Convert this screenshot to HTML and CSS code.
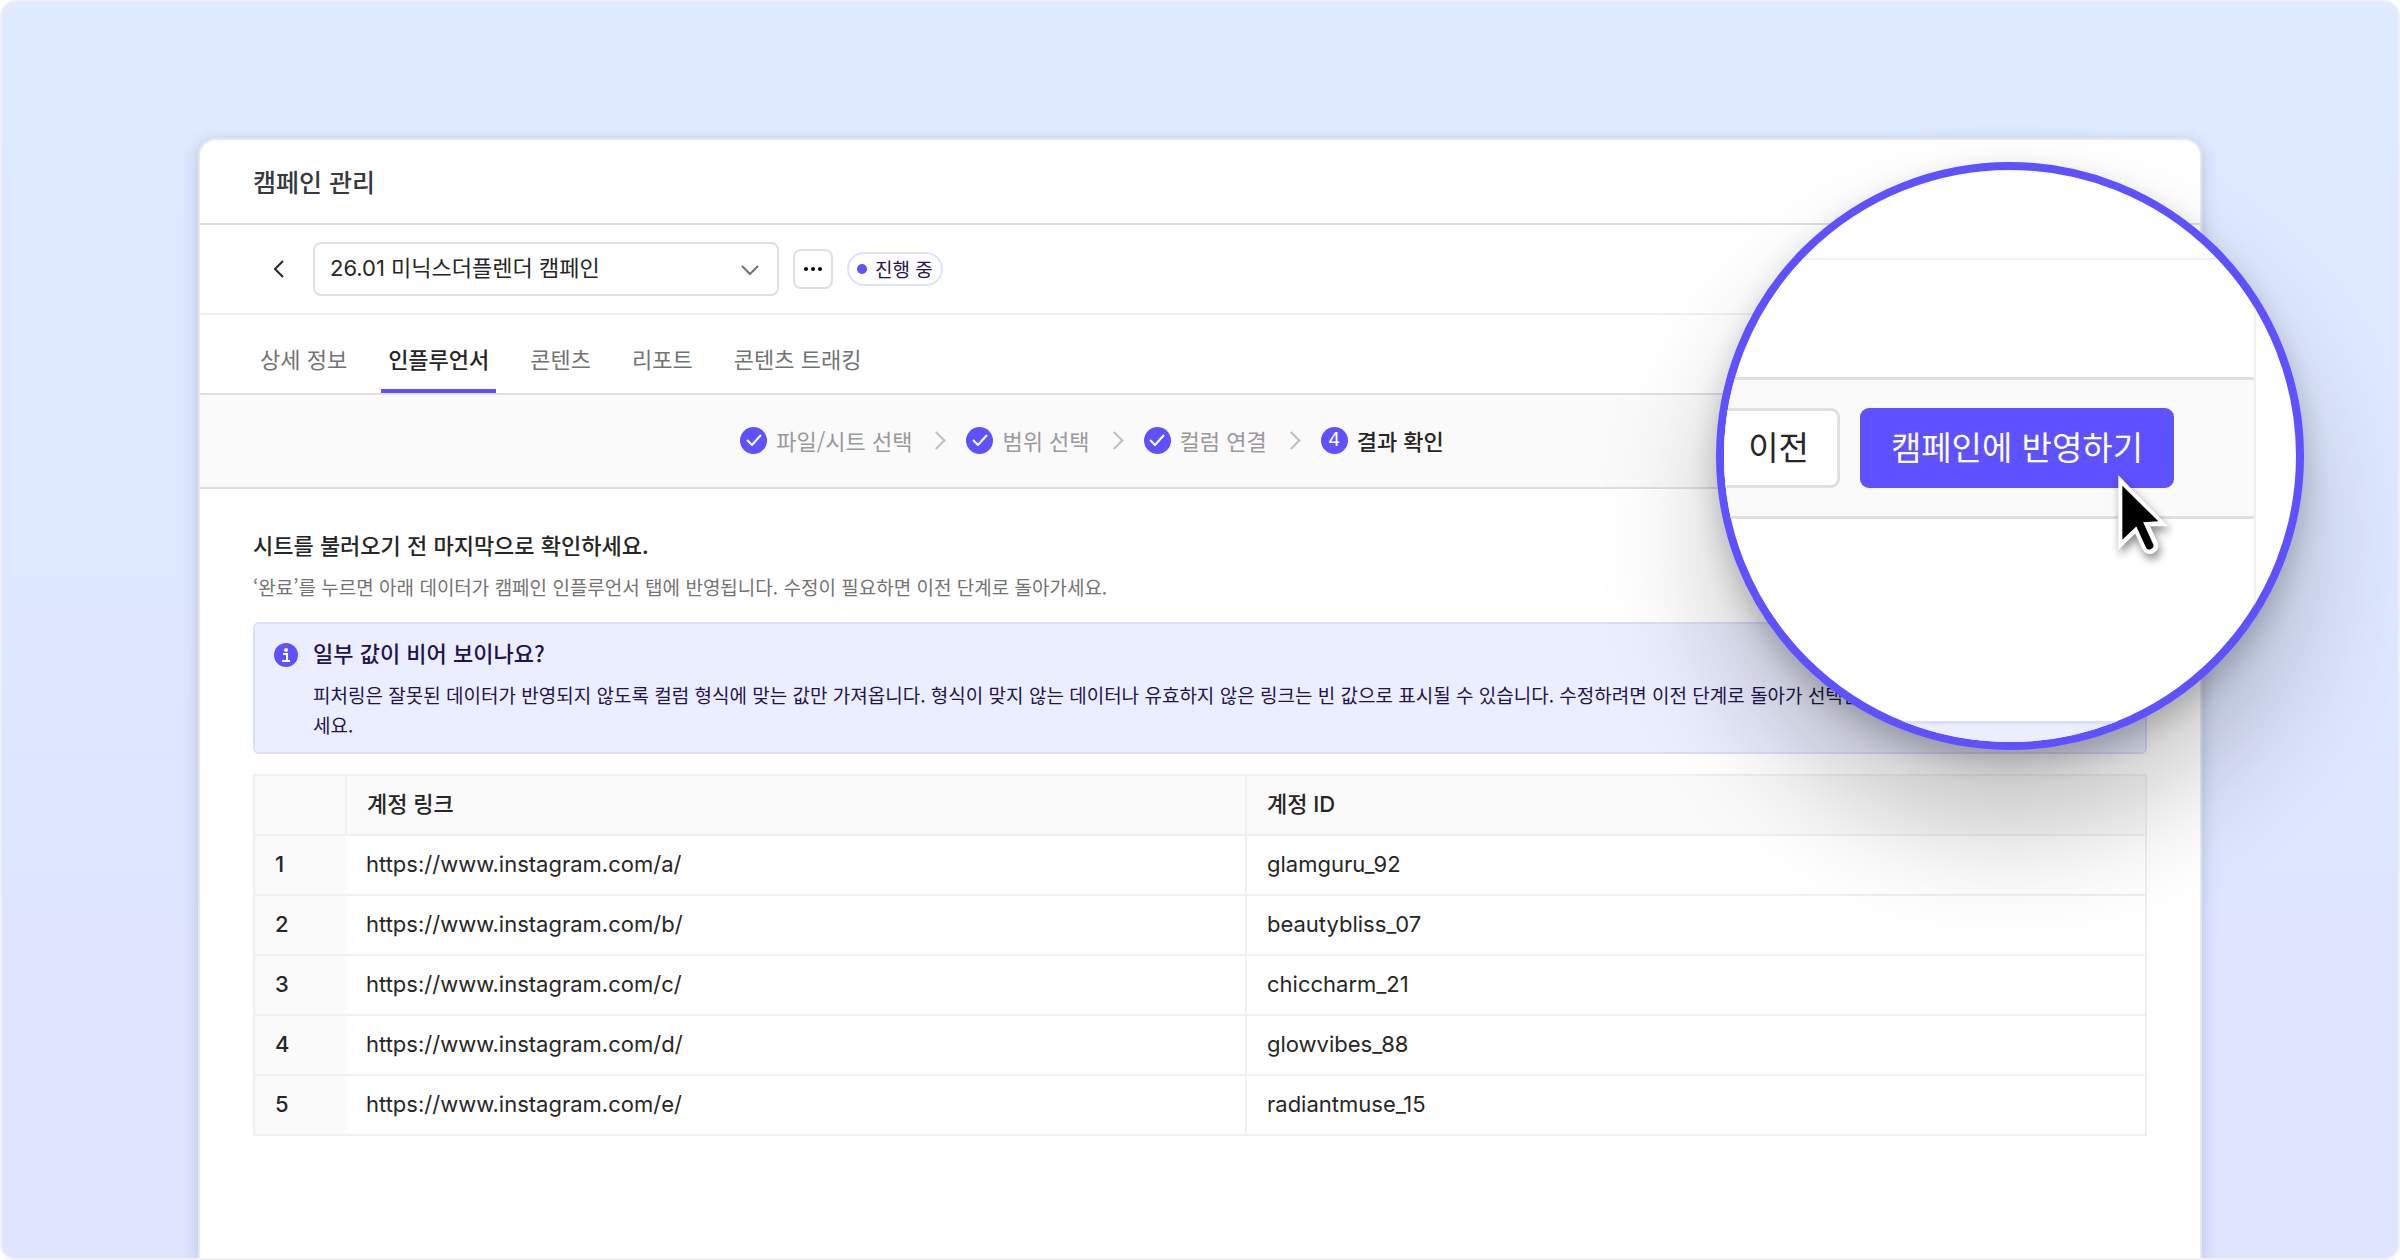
FILE: index.html
```html
<!DOCTYPE html>
<html lang="ko">

<head>
    <meta charset="UTF-8">
    <meta name="viewport" content="width=device-width, initial-scale=1.0">
    <title>캠페인 관리</title>
    <link rel="stylesheet" href="styles.css">
</head>

<body>
    <div class="stage">
        <main class="panel">
            <header class="panel-header">
                <h1>캠페인 관리</h1>
            </header>

            <div class="toolbar">
                <button class="back" type="button" aria-label="뒤로">
                    <svg width="12" height="18" viewBox="0 0 12 18"><path d="M10 1 2 9l8 8" /></svg>
                </button>
                <div class="select-box">
                    <select aria-label="캠페인 선택">
                        <option>26.01 미닉스더플렌더 캠페인</option>
                    </select>
                    <svg class="select-arrow" width="18" height="12" viewBox="0 0 18 12"><path d="m1 2 8 8 8-8" /></svg>
                </div>
                <button class="more" type="button" aria-label="더보기">
                    <svg width="18" height="4" viewBox="0 0 18 4">
                        <circle cx="2" cy="2" r="2" />
                        <circle cx="9" cy="2" r="2" />
                        <circle cx="16" cy="2" r="2" />
                    </svg>
                </button>
                <span class="status">진행 중</span>
            </div>

            <nav class="tabs">
                <a href="#info">상세 정보</a>
                <a href="#influencer" class="active">인플루언서</a>
                <a href="#contents">콘텐츠</a>
                <a href="#report">리포트</a>
                <a href="#tracking">콘텐츠 트래킹</a>
            </nav>

            <ol class="steps">
                <li>
                    <span class="step-mark"><svg width="16" height="12" viewBox="0 0 16 12"><path d="m1 6 5 5 9-10" /></svg></span>
                    파일/시트 선택
                </li>
                <li>
                    <span class="step-mark"><svg width="16" height="12" viewBox="0 0 16 12"><path d="m1 6 5 5 9-10" /></svg></span>
                    범위 선택
                </li>
                <li>
                    <span class="step-mark"><svg width="16" height="12" viewBox="0 0 16 12"><path d="m1 6 5 5 9-10" /></svg></span>
                    컬럼 연결
                </li>
                <li class="current">
                    <span class="step-mark">4</span>
                    결과 확인
                </li>
            </ol>

            <section class="content">
                <h2>시트를 불러오기 전 마지막으로 확인하세요.</h2>
                <p class="desc">‘완료’를 누르면 아래 데이터가 캠페인 인플루언서 탭에 반영됩니다. 수정이 필요하면 이전 단계로 돌아가세요.</p>

                <div class="notice">
                    <svg class="notice-icon" width="24" height="24" viewBox="0 0 24 24">
                        <circle cx="12" cy="12" r="12" fill="#5e51ff" />
                        <circle cx="12" cy="7" r="2" fill="#fff" />
                        <path d="M9 11h4v7M8 18h8" fill="none" stroke="#fff" stroke-width="2" />
                    </svg>
                    <div>
                        <h3>일부 값이 비어 보이나요?</h3>
                        <p>피처링은 잘못된 데이터가 반영되지 않도록 컬럼 형식에 맞는 값만 가져옵니다. 형식이 맞지 않는 데이터나 유효하지 않은 링크는 빈 값으로 표시될 수 있습니다. 수정하려면 이전 단계로 돌아가 선택한 컬럼과 데이터 형식을 확인해주세요.</p>
                    </div>
                </div>

                <table>
                    <thead>
                        <tr>
                            <th class="num"></th>
                            <th>계정 링크</th>
                            <th>계정 ID</th>
                        </tr>
                    </thead>
                    <tbody>
                        <tr>
                            <td class="num">1</td>
                            <td>https://www.instagram.com/a/</td>
                            <td>glamguru_92</td>
                        </tr>
                        <tr>
                            <td class="num">2</td>
                            <td>https://www.instagram.com/b/</td>
                            <td>beautybliss_07</td>
                        </tr>
                        <tr>
                            <td class="num">3</td>
                            <td>https://www.instagram.com/c/</td>
                            <td>chiccharm_21</td>
                        </tr>
                        <tr>
                            <td class="num">4</td>
                            <td>https://www.instagram.com/d/</td>
                            <td>glowvibes_88</td>
                        </tr>
                        <tr>
                            <td class="num">5</td>
                            <td>https://www.instagram.com/e/</td>
                            <td>radiantmuse_15</td>
                        </tr>
                    </tbody>
                </table>
            </section>
        </main>

        <!-- Lupa sobre los botones -->
        <div class="lens">
            <div class="lens-page">
                <div class="lens-toolbar"></div>
                <div class="lens-tabs"></div>
                <div class="lens-actions">
                    <button class="button" type="button">이전</button>
                    <button class="button primary" type="button">캠페인에 반영하기</button>
                </div>
                <div class="lens-content">
                    <div class="lens-notice"></div>
                </div>
            </div>
        </div>

        <svg class="cursor" width="60" height="90" viewBox="0 0 180 270">
            <path d="M10 10 160 163H102L59 186 10 234Z" fill="#fff" />
            <path d="m72 150 33 71" stroke="#fff" stroke-width="50" stroke-linecap="round" />
            <path d="m22 41 108 107-48 3-19 13-41 39Z" fill="#000" />
            <path d="m72 152 31 68" stroke="#000" stroke-width="24" stroke-linecap="round" />
        </svg>
    </div>
</body>

</html>
```
FILE: styles.css
```css
* {
    box-sizing: border-box;
}

body {
    margin: 0;
    background-color: #ffffff;
    color: #262626;
    font-family: "Noto Sans CJK KR", sans-serif;
    font-size: 22px;
    line-height: 32px;
}

h1,
h2,
h3,
p {
    margin: 0;
}

button,
select {
    font: inherit;
    color: inherit;
    cursor: pointer;
}

.stage {
    position: relative;
    min-height: 100vh;
    display: flex;
    padding: 136px 196px 0;
    overflow: hidden;
    border: 2px solid #f0f0f2;
    border-radius: 16px;
    background: linear-gradient(#deebff, #dee9ff 20%, #dee8ff 45%, #dfe5ff 75%);
}

.panel {
    flex: 1;
    background-color: #ffffff;
    border: 2px solid #e8e8ec;
    border-bottom: none;
    border-radius: 18px 18px 0 0;
    box-shadow: 0 4px 16px rgba(60, 70, 140, 0.25);
}

/* Cabecera */
.panel-header {
    display: flex;
    align-items: center;
    height: 85px;
    padding: 0 53px 2px;
    border-bottom: 2px solid #e0e0e0;
}

h1 {
    font-size: 25px;
    font-weight: 500;
    color: #343a40;
}

.toolbar {
    display: flex;
    align-items: center;
    gap: 14px;
    height: 90px;
    padding: 0 59px;
    border-bottom: 2px solid #f0f0f0;
}

.back {
    display: flex;
    align-items: center;
    justify-content: center;
    width: 40px;
    height: 40px;
    padding: 0;
    border: none;
    background: none;
}

.back path {
    fill: none;
    stroke: #262626;
    stroke-width: 2;
}

.select-box {
    display: flex;
    position: relative;
    width: 466px;
}

.select-box select {
    width: 100%;
    height: 54px;
    padding: 0 48px 2px 15px;
    border: 2px solid #e0e0e0;
    border-radius: 8px;
    background-color: #ffffff;
    font-family: "Inter", "Noto Sans CJK KR", sans-serif;
    appearance: none;
}

.select-arrow {
    position: absolute;
    right: 20px;
    top: 22px;
    fill: none;
    stroke: #737373;
    stroke-width: 2;
    pointer-events: none;
}

.more {
    display: flex;
    align-items: center;
    justify-content: center;
    width: 40px;
    height: 40px;
    padding: 0;
    border: 2px solid #e0e0e0;
    border-radius: 8px;
    background-color: #ffffff;
}

.status {
    display: flex;
    align-items: center;
    gap: 8px;
    height: 34px;
    padding: 0 8px;
    border: 2px solid #dfe2ff;
    border-radius: 17px;
    color: #1f1450;
    font-size: 19px;
}

.status::before {
    content: "";
    width: 10px;
    height: 10px;
    border-radius: 50%;
    background-color: #5e51ff;
}

/* Pestañas */
.tabs {
    display: flex;
    gap: 27px;
    height: 80px;
    padding: 10px 53px 0;
    border-bottom: 2px solid #e0e0e0;
}

.tabs a {
    display: flex;
    align-items: center;
    padding: 2px 7px 0;
    border-bottom: 4px solid transparent;
    color: #737373;
    text-decoration: none;
}

.tabs a.active {
    border-bottom-color: #5e51ff;
    color: #262626;
    font-weight: 500;
}

/* Pasos */
.steps {
    display: flex;
    align-items: center;
    justify-content: center;
    height: 94px;
    margin: 0;
    padding: 0 269px 2px 53px;
    border-bottom: 2px solid #e0e0e0;
    background-color: #fafafa;
    color: #999999;
    list-style: none;
}

.steps li {
    display: flex;
    align-items: center;
    gap: 9px;
}

.steps li + li::before {
    content: "";
    width: 11px;
    height: 11px;
    margin: 0 14px 0 18px;
    border: solid #bfbfbf;
    border-width: 2px 2px 0 0;
    transform: rotate(45deg);
}

.steps .current {
    color: #262626;
    font-weight: 500;
}

.step-mark {
    display: flex;
    align-items: center;
    justify-content: center;
    width: 27px;
    height: 27px;
    border-radius: 50%;
    background-color: #5e51ff;
    color: #ffffff;
    font-family: "Inter", sans-serif;
    font-size: 19px;
    font-weight: 400;
}

.step-mark path {
    fill: none;
    stroke: #ffffff;
    stroke-width: 2;
}

/* Contenido */
.content {
    padding: 39px 53px;
}

h2,
h3 {
    font-size: 22px;
    font-weight: 500;
}

.desc {
    margin-top: 12px;
    color: #737373;
    font-size: 19px;
    line-height: 30px;
}

.notice {
    display: flex;
    gap: 15px;
    margin-top: 20px;
    padding: 12px 20px 12px 19px;
    border: 2px solid #dbdfff;
    border-radius: 6px;
    background-color: #ebeeff;
    color: #1f1450;
}

.notice-icon {
    flex: none;
    margin-top: 7px;
}

.notice p {
    margin-top: 12px;
    font-size: 19px;
    line-height: 30px;
    word-break: break-all;
}

table {
    width: 100%;
    margin-top: 20px;
    border-collapse: collapse;
    table-layout: fixed;
    border: 2px solid #f0f0f0;
    font-family: "Inter", "Noto Sans CJK KR", sans-serif;
}

th,
td {
    height: 60px;
    padding: 0 20px 2px;
    border-bottom: 2px solid #f0f0f0;
    text-align: left;
    font-weight: 400;
}

th {
    background-color: #fafafa;
    font-weight: 500;
}

th + th,
td:last-child {
    border-left: 2px solid #f0f0f0;
}

.num {
    width: 92px;
    background-color: #fafafa;
    font-weight: 500;
}

/* Lupa */
.lens {
    position: absolute;
    top: 160px;
    right: 94px;
    width: 588px;
    height: 588px;
    overflow: hidden;
    border: 8px solid #5e51ff;
    border-radius: 50%;
    background-color: #ffffff;
    box-shadow: 0 12px 28px rgba(0, 0, 0, 0.2), 0 80px 120px rgba(0, 0, 0, 0.22);
}

.lens-page {
    margin-right: 40px;
    border-right: 2px solid #f0f0f0;
}

.lens-toolbar {
    height: 90px;
    border-bottom: 2px solid #f0f0f0;
}

.lens-tabs {
    height: 120px;
    border-bottom: 3px solid #e0e0e0;
}

.lens-actions {
    display: flex;
    align-items: center;
    justify-content: flex-end;
    gap: 20px;
    height: 139px;
    padding-right: 80px;
    border-bottom: 3px solid #e0e0e0;
    background-color: #fafafa;
}

.button {
    height: 80px;
    padding: 0 28px 5px;
    border: 3px solid #e0e0e0;
    border-radius: 9px;
    background-color: #ffffff;
    font-size: 33px;
    white-space: nowrap;
}

.button.primary {
    border-color: #5e51ff;
    background-color: #5e51ff;
    color: #ffffff;
}

.lens-content {
    padding-top: 202px;
}

.lens-notice {
    height: 100px;
    border-top: 3px solid #dbdfff;
    background-color: #ebeeff;
}

.cursor {
    position: absolute;
    top: 470px;
    right: 223px;
    fill: none;
    filter: drop-shadow(2px 5px 4px rgba(0, 0, 0, 0.45));
}
```
